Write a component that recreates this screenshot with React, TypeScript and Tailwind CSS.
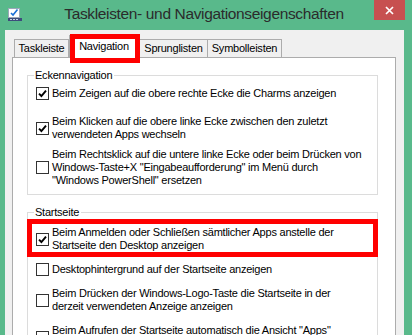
import React from "react";

const Box = ({ checked }: { checked?: boolean }) => (
  <span className="flex h-[13px] w-[13px] shrink-0 items-center justify-center border border-[#333333] bg-white">
    {checked && (
      <svg width="9" height="9" viewBox="0 0 9 9">
        <path d="M1 4.6 L3.4 7 L8 1.6" stroke="#000" strokeWidth="1.9" fill="none" />
      </svg>
    )}
  </span>
);

const Option = ({ lines, checked }: { lines: string[]; checked?: boolean }) => (
  <div className="flex items-center gap-[3px] pl-[8px]">
    <Box checked={checked} />
    <div className="leading-[13px]">
      {lines.map((l) => (
        <div key={l} className="whitespace-nowrap">
          {l}
        </div>
      ))}
    </div>
  </div>
);

const Group = ({ title, children }: { title: string; children: React.ReactNode }) => (
  <div className="ml-[14px] w-[351px] border border-[#dcdcdc]">
    <div className="-mt-[7px] ml-[6px] w-fit bg-white pl-[1px] pr-[2px] leading-[13px]">{title}</div>
    {children}
  </div>
);

const TabIcon = () => (
  <svg width="15" height="15" viewBox="0 0 15 15">
    <rect x="1.5" y="1.5" width="11" height="9" fill="#fff" stroke="#9aa7b8" />
    <path d="M4 6 L6 8 L10.5 2.5" stroke="#1a6fd6" strokeWidth="1.6" fill="none" />
    <rect x="1" y="11" width="14" height="3" fill="#3d4c7c" />
    <rect x="3" y="12" width="2" height="1" fill="#c9d2e6" />
    <rect x="6" y="12" width="2" height="1" fill="#c9d2e6" />
    <rect x="9" y="12" width="2" height="1" fill="#c9d2e6" />
  </svg>
);

export default function App() {
  return (
    <div
      className="flex h-[335px] w-[412px] flex-col overflow-hidden bg-[#59b98b] text-[11px] tracking-[-0.23px] text-black"
      style={{ fontFamily: '"Liberation Sans", Arial, sans-serif' }}
    >
      <div className="flex h-[30px] shrink-0 items-start">
        <div className="ml-[7px] mt-[7px]">
          <TabIcon />
        </div>
        <div className="flex-1 pl-[12px] pt-[5px] text-center text-[15.5px] leading-[18px] tracking-[-0.35px] text-[#2b2b2b]">
          Taskleisten- und Navigationseigenschaften
        </div>
        <div className="mr-[7px] flex h-[20px] w-[31px] items-center justify-center bg-[#c75050]">
          <svg width="9" height="9" viewBox="0 0 9 9">
            <path d="M1 1 L8 8 M8 1 L1 8" stroke="#fff" strokeWidth="1.7" />
          </svg>
        </div>
      </div>

      <div className="ml-[5px] mr-[8px] flex flex-1 flex-col bg-[#f0f0f0] pl-[7px] pt-[5px]">
        <div className="relative z-10 -mb-px flex h-[23px] items-end pl-[2px]">
          <div className="mb-px flex h-[18px] w-[55px] items-center justify-center border-l border-r border-t border-[#acacac] bg-[#f0f0f0]">
            Taskleiste
          </div>
          <div className="relative flex h-[23px] w-[70px] items-center justify-center border-l border-r border-t border-[#acacac] bg-white pb-[1px]">
            Navigation
            <div className="pointer-events-none absolute -bottom-[5px] -right-[2px] -top-[2px] left-0 border-[5px] border-[#ff0000]" />
          </div>
          <div className="mb-px flex h-[18px] w-[69px] items-center justify-center border-l border-r border-t border-[#acacac] bg-[#f0f0f0]">
            Sprunglisten
          </div>
          <div className="-ml-px mb-px flex h-[18px] w-[75px] items-center justify-center border-l border-r border-t border-[#acacac] bg-[#f0f0f0]">
            Symbolleisten
          </div>
        </div>

        <div className="w-[384px] flex-1 border border-[#acacac] bg-white pt-[17px]">
          <Group title="Eckennavigation">
            <div className="flex flex-col pb-[7px] pt-[5px]">
              <Option checked lines={["Beim Zeigen auf die obere rechte Ecke die Charms anzeigen"]} />
              <div className="mt-[15px]">
                <Option
                  checked
                  lines={["Beim Klicken auf die obere linke Ecke zwischen den zuletzt", "verwendeten Apps wechseln"]}
                />
              </div>
              <div className="mt-[7px]">
                <Option
                  lines={[
                    "Beim Rechtsklick auf die untere linke Ecke oder beim Drücken von",
                    "Windows-Taste+X \"Eingabeaufforderung\" im Menü durch",
                    "\"Windows PowerShell\" ersetzen",
                  ]}
                />
              </div>
            </div>
          </Group>

          <div className="mt-[17px]">
            <Group title="Startseite">
              <div className="flex flex-col pb-[7px] pt-[7px]">
                <div className="relative">
                  <Option
                    checked
                    lines={[
                      "Beim Anmelden oder Schließen sämtlicher Apps anstelle der",
                      "Startseite den Desktop anzeigen",
                    ]}
                  />
                  <div className="pointer-events-none absolute -bottom-[5px] -left-[1px] -right-[1px] -top-[7px] border-[5px] border-[#ff0000]" />
                </div>
                <div className="mt-[11px]">
                  <Option lines={["Desktophintergrund auf der Startseite anzeigen"]} />
                </div>
                <div className="mt-[11px]">
                  <Option
                    lines={[
                      "Beim Drücken der Windows-Logo-Taste die Startseite in der",
                      "derzeit verwendeten Anzeige anzeigen",
                    ]}
                  />
                </div>
                <div className="mt-[11px]">
                  <Option
                    lines={[
                      "Beim Aufrufen der Startseite automatisch die Ansicht \"Apps\"",
                      "anzeigen",
                    ]}
                  />
                </div>
              </div>
            </Group>
          </div>
        </div>
      </div>
    </div>
  );
}
